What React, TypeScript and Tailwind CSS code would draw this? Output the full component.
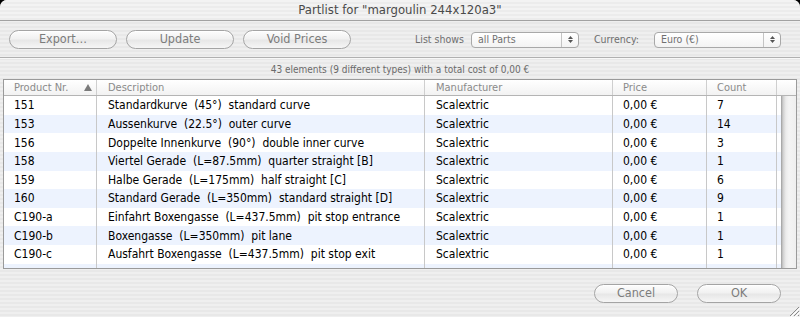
import React from "react";

const rows = [
  ["151", "Standardkurve  (45°)  standard curve", "7"],
  ["153", "Aussenkurve  (22.5°)  outer curve", "14"],
  ["156", "Doppelte Innenkurve  (90°)  double inner curve", "3"],
  ["158", "Viertel Gerade  (L=87.5mm)  quarter straight [B]", "1"],
  ["159", "Halbe Gerade  (L=175mm)  half straight [C]", "6"],
  ["160", "Standard Gerade  (L=350mm)  standard straight [D]", "9"],
  ["C190-a", "Einfahrt Boxengasse  (L=437.5mm)  pit stop entrance", "1"],
  ["C190-b", "Boxengasse  (L=350mm)  pit lane", "1"],
  ["C190-c", "Ausfahrt Boxengasse  (L=437.5mm)  pit stop exit", "1"],
  ["", "", ""],
];

function AquaButton({ label, w }: { label: string; w: string }) {
  return (
    <div
      className={`${w} h-[19px] rounded-full border border-[#a4a4a4] bg-[linear-gradient(180deg,#fdfdfd_0%,#f1f1f1_45%,#e7e7e7_55%,#f6f6f6_100%)] shadow-[inset_0_1px_0_#ffffff] flex items-center justify-center text-[12.5px] text-[#7c7c7c] leading-none`}
    >
      {label}
    </div>
  );
}

function Popup({ label, w }: { label: string; w: string }) {
  return (
    <div
      className={`${w} h-[16px] rounded-[4px] border border-[#a8a8a8] bg-[linear-gradient(180deg,#ffffff,#f3f3f3)] flex items-stretch text-[10.5px] text-[#707070] leading-none`}
    >
      <div className="flex-1 flex items-center pl-[6px]">{label}</div>
      <div className="w-[17px] border-l border-[#c4c4c4] flex flex-col items-center justify-center gap-[1px]">
        <svg width="5" height="3" viewBox="0 0 5 3">
          <path d="M0 3 L2.5 0 L5 3 Z" fill="#555" />
        </svg>
        <svg width="5" height="3" viewBox="0 0 5 3">
          <path d="M0 0 L2.5 3 L5 0 Z" fill="#555" />
        </svg>
      </div>
    </div>
  );
}

export default function App() {
  return (
    <div className="w-[800px] h-[317px] bg-black overflow-hidden font-['DejaVu_Sans_Condensed','DejaVu_Sans',sans-serif]">
      <div className="relative w-full h-full rounded-t-[7px] overflow-hidden flex flex-col bg-[repeating-linear-gradient(180deg,#efefef_0px,#efefef_2px,#e8e8e8_2px,#e8e8e8_4px)]">
        {/* title bar */}
        <div className="h-[21px] shrink-0 border-b border-[#a2a2a2] flex items-center justify-center text-[13px] text-[#4a4a4a] bg-[repeating-linear-gradient(180deg,#f3f3f3_0px,#f3f3f3_2px,#ececec_2px,#ececec_4px)]">
          Partlist for "margoulin 244x120a3"
        </div>
        {/* toolbar */}
        <div className="h-[37px] shrink-0 border-b border-[#b0b0b0] shadow-[0_1px_0_#f8f8f8] flex items-center pl-[9px] pt-[1px]">
          <div className="flex items-center gap-[9px]">
            <AquaButton label="Export…" w="w-[108px]" />
            <AquaButton label="Update" w="w-[108px]" />
            <AquaButton label="Void Prices" w="w-[108px]" />
          </div>
          <div className="ml-[64px] w-[56px] text-[10.5px] text-[#6e6e6e]">List shows</div>
          <Popup label="all Parts" w="w-[108px]" />
          <div className="ml-[15px] w-[60px] text-[10.5px] text-[#6e6e6e]">Currency:</div>
          <Popup label="Euro (€)" w="w-[127px]" />
        </div>
        {/* status */}
        <div className="h-[21px] shrink-0 flex items-center justify-center text-[10px] text-[#6a6a6a] pt-[1px]">
          43 elements (9 different types) with a total cost of 0,00 €
        </div>
        {/* table */}
        <div className="h-[190px] shrink-0 mx-[3px] border border-[#9a9a9a] bg-white flex flex-col">
          <div className="h-[16px] shrink-0 flex border-b border-[#b4b4b4] bg-[linear-gradient(180deg,#ffffff,#f2f2f2)] text-[11px] text-[#8a8a8a] leading-none">
            <div className="w-[93px] border-r border-[#cfcfcf] flex items-center pl-[10px] pr-[4px] justify-between">
              <span>Product Nr.</span>
              <svg width="8" height="7" viewBox="0 0 8 7">
                <path d="M0 7 L4 0 L8 7 Z" fill="#7a7a7a" />
              </svg>
            </div>
            <div className="w-[328px] border-r border-[#cfcfcf] flex items-center pl-[11px]">Description</div>
            <div className="w-[188px] border-r border-[#cfcfcf] flex items-center pl-[11px]">Manufacturer</div>
            <div className="w-[94px] border-r border-[#cfcfcf] flex items-center pl-[10px]">Price</div>
            <div className="w-[70px] border-r border-[#cfcfcf] flex items-center pl-[10px]">Count</div>
            <div className="flex-1" />
          </div>
          <div className="flex-1 flex overflow-hidden">
            <div className="w-[777px] flex flex-col text-[12px] text-black leading-none">
              {rows.map((r, i) => (
                <div
                  key={i}
                  className={`h-[18.625px] shrink-0 flex ${i % 2 === 1 ? "bg-[#edf3fe]" : "bg-white"}`}
                >
                  <div className="w-[93px] border-r border-[#c8c8c8] flex items-center pl-[10px]">{r[0]}</div>
                  <div className="w-[328px] border-r border-[#c8c8c8] flex items-center pl-[11px] whitespace-pre">{r[1]}</div>
                  <div className="w-[188px] border-r border-[#c8c8c8] flex items-center pl-[11px]">{r[0] ? "Scalextric" : ""}</div>
                  <div className="w-[94px] border-r border-[#c8c8c8] flex items-center pl-[10px]">{r[0] ? "0,00 €" : ""}</div>
                  <div className="w-[70px] border-r border-[#c8c8c8] flex items-center pl-[10px]">{r[2]}</div>
                  <div className="flex-1" />
                </div>
              ))}
            </div>
            <div className="flex-1 bg-[linear-gradient(90deg,#9d9d9d_0px,#cfcfcf_2px,#ececec_5px,#f4f4f4_8px,#efefef_100%)]" />
          </div>
        </div>
        {/* bottom buttons */}
        <div className="flex-1 flex justify-end items-start pt-[15px] pr-[19px] gap-[19px]">
          <AquaButton label="Cancel" w="w-[84px]" />
          <AquaButton label="OK" w="w-[84px]" />
        </div>
        <svg className="absolute right-0 bottom-0" width="13" height="13" viewBox="0 0 13 13">
          <path d="M12 3 L3 12 M12 7 L7 12 M12 11 L11 12" stroke="#8a8a8a" strokeWidth="1" />
          <path d="M13 4 L4 13 M13 8 L8 13" stroke="#ffffff" strokeWidth="1" />
        </svg>
      </div>
    </div>
  );
}
